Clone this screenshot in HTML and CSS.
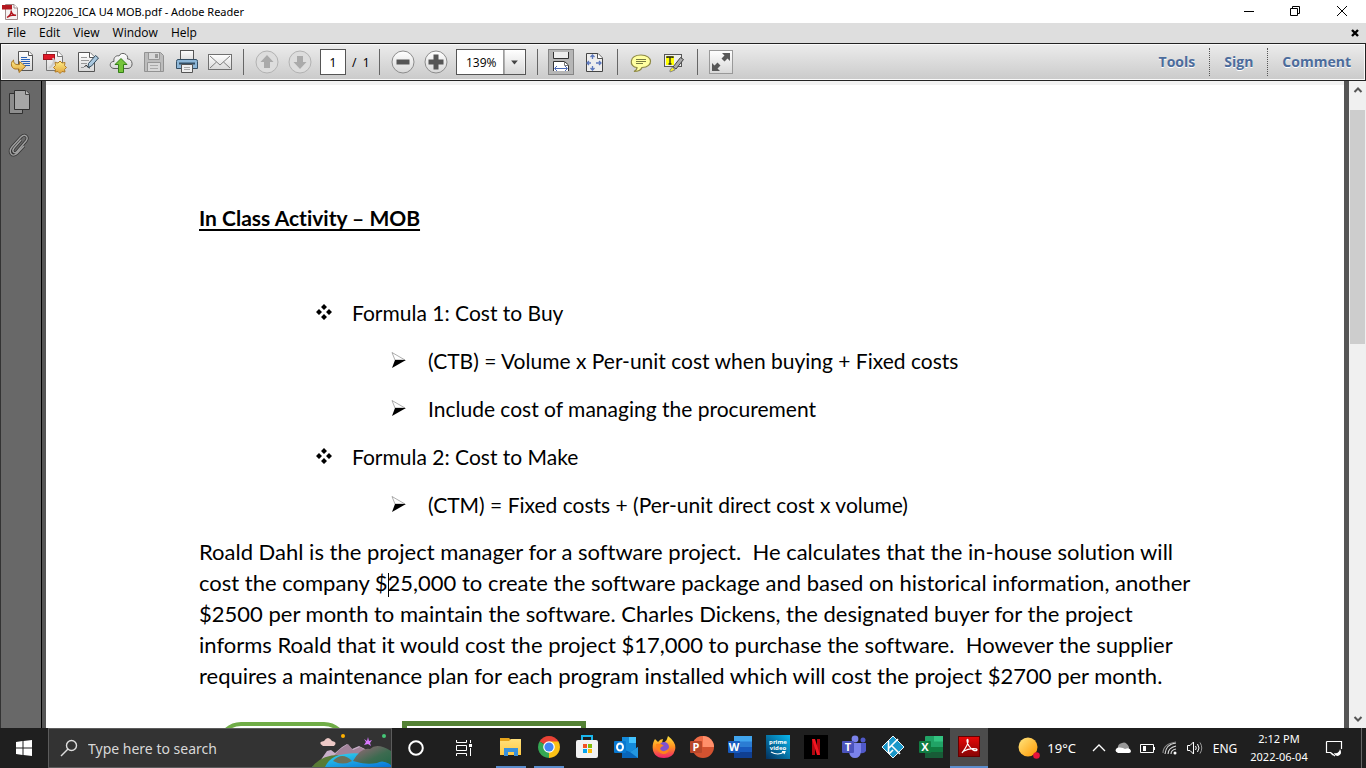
FILE: index.html
```html
<!DOCTYPE html>
<html lang="en">
<head>
<meta charset="utf-8">
<title>PROJ2206_ICA U4 MOB.pdf - Adobe Reader</title>
<link rel="stylesheet" href="styles.css">
</head>
<body>
<svg class="defs" width="0" height="0" aria-hidden="true">
  <defs>
    <linearGradient id="paper" x1="0" y1="0" x2="0" y2="1"><stop offset="0" stop-color="#fff"/><stop offset="1" stop-color="#d8d8d8"/></linearGradient>
    <linearGradient id="gold" x1="0" y1="0" x2="0" y2="1"><stop offset="0" stop-color="#fff08a"/><stop offset="1" stop-color="#e0a23a"/></linearGradient>
    <linearGradient id="sun" x1="0" y1="0" x2="1" y2="1"><stop offset="0" stop-color="#ffe680"/><stop offset="1" stop-color="#ff9800"/></linearGradient>
    <linearGradient id="water" x1="0" y1="0" x2="1" y2="1"><stop offset="0" stop-color="#35dff0"/><stop offset="1" stop-color="#0873d8"/></linearGradient>
    <linearGradient id="hill" x1="0" y1="0" x2="1" y2="1"><stop offset="0" stop-color="#a1687b"/><stop offset=".6" stop-color="#3d6b50"/><stop offset="1" stop-color="#256647"/></linearGradient>
    <linearGradient id="fire" x1="0" y1="0" x2="0" y2="1"><stop offset="0" stop-color="#ffe23c"/><stop offset=".5" stop-color="#ff9020"/><stop offset="1" stop-color="#f0206c"/></linearGradient>
    <linearGradient id="prime" x1="1" y1="0" x2="0" y2="1"><stop offset="0" stop-color="#08b8f0"/><stop offset="1" stop-color="#03305c"/></linearGradient>
    <linearGradient id="acro" x1="0" y1="0" x2="0" y2="1"><stop offset="0" stop-color="#e80808"/><stop offset="1" stop-color="#860505"/></linearGradient>
    <linearGradient id="folder" x1="0" y1="0" x2="0" y2="1"><stop offset="0" stop-color="#ffe17c"/><stop offset="1" stop-color="#ffc943"/></linearGradient>
  </defs>
</svg>

<header class="titlebar">
  <svg class="app-icon" width="16" height="16" viewBox="0 0 16 16" aria-hidden="true">
    <path d="M3.500.5H12L15.500 4V15.500H3.500Z" fill="#f5f2f2" stroke="#a08a8a"/>
    <path d="M12 .5V4H15.500" fill="#fff" stroke="#a08a8a"/>
    <path d="M0 1H10V5.500H0Z" fill="#b31820"/>
    <path d="M5 13.500C7.500 12 9.500 9 9.200 6.500C9 9 11.500 11.500 14 11.200C10.500 10.500 7 12 5 13.500Z" fill="none" stroke="#b31820" stroke-width="1.400"/>
  </svg>
  <span class="title-text">PROJ2206_ICA U4 MOB.pdf - Adobe Reader</span>
  <div class="window-controls">
    <button aria-label="Minimize"><svg width="12" height="12" viewBox="0 0 12 12"><path d="M1 6.500H11" stroke="#000"/></svg></button>
    <button aria-label="Restore"><svg width="12" height="12" viewBox="0 0 12 12"><path d="M3.500 3.500V1.500H10.500V8.500H8.500M1.500 3.500H8.500V10.500H1.500Z" fill="none" stroke="#000"/></svg></button>
    <button aria-label="Close"><svg width="12" height="12" viewBox="0 0 12 12"><path d="M1 1L11 11M11 1L1 11" stroke="#000"/></svg></button>
  </div>
</header>

<nav class="menubar" aria-label="Menu">
  <button>File</button><button>Edit</button><button>View</button><button>Window</button><button>Help</button>
  <button class="doc-close" aria-label="Close document"><svg width="8" height="8" viewBox="0 0 8 8"><path d="M1 1L7 7M7 1L1 7" stroke="#000" stroke-width="2.400"/></svg></button>
</nav>

<div class="toolbar" role="toolbar" aria-label="Tools">
  <button class="tool" aria-label="Open"><svg width="24" height="24" viewBox="0 0 24 24"><path d="M8.500 1.500H19L22.500 5V20.500H8.500Z" fill="url(#paper)" stroke="#555"/><path d="M18.500 1.500V5.500H22.500" fill="#fff" stroke="#555"/><path d="M11 7.500H17M11 9.500H20M11 11.500H20M13 13.500H20M15 15.500H20" stroke="#2862b8"/><path d="M3.500 10C.5 12 .5 18 5 19H9V22.500L15.500 16.500L9.500 11.500V14.500C6 15 3.500 14 3.500 10Z" fill="url(#gold)" stroke="#a87520"/></svg></button>
  <button class="tool" aria-label="Create PDF"><svg width="24" height="24" viewBox="0 0 24 24"><path d="M3.500 1.500H15L19.500 6V20.500H3.500Z" fill="url(#paper)" stroke="#777"/><path d="M14.500 1.500V6.500H19.500" fill="#fff" stroke="#777"/><rect x=".5" y="4.500" width="11" height="5" fill="#df1927" stroke="#a2121c"/><path d="M10 8Q11 13 17 14M6 18Q11 15 11 10" fill="none" stroke="#ccc" stroke-width="2"/><path d="M17 11L19 13L22 12.500L21.500 15.500L23.500 17.500L21.500 19.500L22 22L19 21.500L17 23.500L15 21.500L12 22L12.500 19.500L10.500 17.500L12.500 15.500L12 12.500L15 13Z" fill="url(#gold)" stroke="#b27b25"/></svg></button>
  <button class="tool" aria-label="Edit"><svg width="24" height="24" viewBox="0 0 24 24"><path d="M2.500 2.500H14L18.500 7V21.500H2.500Z" fill="url(#paper)" stroke="#555"/><path d="M13.500 2.500V7.500H18.500" fill="#fff" stroke="#555"/><path d="M5 7.500H11M5 10.500H13M5 13.500H11M5 17.500H8" stroke="#999"/><path d="M8.500 17Q10 14 11 16T14 18" fill="none" stroke="#222"/><path d="M12 17.500L12.500 13.500L19.500 5.500L22.500 8L15.500 16Z" fill="#aac8df" stroke="#344c5e"/></svg></button>
  <button class="tool" aria-label="Upload"><svg width="24" height="24" viewBox="0 0 24 24"><path d="M5 18.500C-.5 18 .5 11 5 11.500C4 7 8 5 10 6C12 1 20 4 18.500 9C24 8.500 25 18 19 18.500Z" fill="url(#paper)" stroke="#606060"/><path d="M12 8.500L18 14.500H14.500V22.500H9.500V14.500H6Z" fill="#75c43a" stroke="#347e18"/></svg></button>
  <button class="tool" aria-label="Save" disabled><svg width="24" height="24" viewBox="0 0 24 24"><path d="M2.500 2.500H18.500L21.500 5.500V21.500H2.500Z" fill="#bcbcbc" stroke="#929292"/><path d="M6.500 3V9.500H17.500V3M5.500 21V12.500H18.500V21" fill="#d8d8d8" stroke="#969696"/><path d="M13 4H16V8H13Z" fill="#979797"/><path d="M8 15.500H16M8 18.500H16" stroke="#aaa"/></svg></button>
  <button class="tool" aria-label="Print"><svg width="24" height="24" viewBox="0 0 24 24"><rect x="5.500" y=".5" width="13" height="11" fill="url(#paper)" stroke="#555"/><path d="M3 9.500H21Q22.500 9.500 22.500 11.500V18.500H1.500V11.500Q1.500 9.500 3 9.500Z" fill="#8db7d8" stroke="#344f65"/><path d="M4 13.500H20" stroke="#344f65" stroke-width="2"/><path d="M6.500 14.500H17.500V22.500H6.500Z" fill="#eee" stroke="#555"/><path d="M9 17.500H15M9 19.500H15" stroke="#aaa"/></svg></button>
  <button class="tool" aria-label="Email"><svg width="24" height="24" viewBox="0 0 24 24"><rect x=".5" y="4.500" width="23" height="15" fill="url(#paper)" stroke="#707070"/><path d="M2 6L12 15L22 6M2 18L8.500 12M22 18L15.500 12" fill="none" stroke="#808080"/></svg></button>
  <span class="sep"></span>
  <button class="tool" aria-label="Previous page" disabled><svg width="24" height="24" viewBox="0 0 24 24"><circle cx="12" cy="12" r="11" fill="#ddd" stroke="#b2b2b2"/><path d="M12 5L18.500 12H15V18H9V12H5.500Z" fill="#aaa"/></svg></button>
  <button class="tool" aria-label="Next page" disabled><svg width="24" height="24" viewBox="0 0 24 24"><circle cx="12" cy="12" r="11" fill="#ddd" stroke="#b2b2b2"/><path d="M12 19L18.500 12H15V6H9V12H5.500Z" fill="#aaa"/></svg></button>
  <input class="page-input" aria-label="Page number" value="1">
  <span class="page-total">/&nbsp; 1</span>
  <span class="sep"></span>
  <button class="tool" aria-label="Zoom out"><svg width="24" height="24" viewBox="0 0 24 24"><circle cx="12" cy="12" r="11" fill="url(#paper)" stroke="#8c8c8c"/><path d="M5.500 12H18.500" stroke="#555" stroke-width="5"/></svg></button>
  <button class="tool" aria-label="Zoom in"><svg width="24" height="24" viewBox="0 0 24 24"><circle cx="12" cy="12" r="11" fill="url(#paper)" stroke="#8c8c8c"/><path d="M4.500 12H19.500M12 4.500V19.500" stroke="#555" stroke-width="5"/></svg></button>
  <span class="zoom-box">
    <select aria-label="Zoom level"><option>139%</option></select>
    <svg class="zoom-arrow" width="22" height="25" viewBox="0 0 22 25" aria-hidden="true"><path d="M0 0H22V25H0Z" fill="url(#paper)"/><path d="M.5 0V25" stroke="#555"/><path d="M8 11H15L11.500 15Z" fill="#444"/></svg>
  </span>
  <span class="sep"></span>
  <button class="tool" aria-label="Fit width"><svg width="26" height="26" viewBox="0 0 26 26"><rect x=".5" y=".5" width="25" height="25" fill="#b6b6b6" stroke="#858585"/><path d="M5.500 3V9.500H20.500V3" fill="#eee" stroke="#333"/><path d="M5.500 22V12.500H16.500L20.500 16V22" fill="#fff" stroke="#333"/><path d="M16.500 12.500V16.500H20.500" fill="none" stroke="#777"/><path d="M7 19.500H19M9 17L6.500 19.500L9 22M17 17L19.500 19.500L17 22" fill="none" stroke="#4b69b5"/></svg></button>
  <button class="tool" aria-label="Fit page"><svg width="24" height="24" viewBox="0 0 24 24"><path d="M4.500 3.500H16L20.500 8V21.500H4.500Z" fill="#eee" stroke="#444"/><path d="M15.500 3.500V8.500H20.500" fill="#fff" stroke="#555"/><path d="M10.500 5V9M8.500 7L10.500 5L12.500 7M10.500 20V16M8.500 18L10.500 20L12.500 18M5 13H9M7 11L5 13L7 15M19 13H14M17 11L19 13L17 15" fill="none" stroke="#5d78bd" stroke-width="1.300"/></svg></button>
  <span class="sep"></span>
  <button class="tool" aria-label="Comment"><svg width="24" height="24" viewBox="0 0 24 24"><path d="M12 5C-.5 5 0 17 8 17.500C8 20 6 21 5 21.500C9 21.500 12 20 13 17.500C25 17 24 5 12 5Z" fill="#ffffa0" stroke="#8d8844" stroke-width="1.200"/><path d="M7 9.500H17M7 11.500H17M7 13.500H14" stroke="#777b42"/></svg></button>
  <button class="tool" aria-label="Highlight text"><svg width="24" height="24" viewBox="0 0 24 24"><rect x="2.500" y="4.500" width="17" height="12" fill="#eee" stroke="#555"/><rect x="4" y="6" width="8" height="9" fill="#ff0"/><path d="M5 8V7H11V8M8 7V14M6.500 14H9.500" fill="none" stroke="#222" stroke-width="1.300"/><path d="M11 17L18.500 7.500L21.500 9.500L14 19Z" fill="#aaa" stroke="#444"/><path d="M10.500 17L8 20V22L13 20Z" fill="#f6ee28" stroke="#888"/></svg></button>
  <span class="sep"></span>
  <button class="tool" aria-label="Read mode"><svg width="24" height="24" viewBox="0 0 24 24"><rect x=".5" y=".5" width="23" height="23" fill="url(#paper)" stroke="#999"/><path d="M13 3H21V11L18.500 8.500L15.500 11.500L12.500 8.500L15.500 5.500ZM3 13L5.500 15.500L8.500 12.500L11.500 15.500L8.500 18.500L11 21H3Z" fill="#585858"/></svg></button>
  <div class="panels"><button>Tools</button><button>Sign</button><button>Comment</button></div>
</div>

<main class="workspace">
  <aside class="rail">
    <button aria-label="Page thumbnails"><svg width="24" height="26" viewBox="0 0 24 26"><path d="M2.500 4.500H15.500V24.500H2.500Z" fill="#8d8d8d" stroke="#303030"/><path d="M7.500 1.500H19L22.500 5V20.500H7.500Z" fill="#a6a6a6" stroke="#303030"/><path d="M18.500 1.500V5.500H22.500" fill="#bbb" stroke="#444"/></svg></button>
    <button aria-label="Attachments"><svg width="24" height="26" viewBox="0 0 24 26"><path d="M14 8L7 16C4 20 8 22 10 19.500L19 9C22 5 18 1 14 5L5 15C1 20 5 26 10 21.500L17 14" fill="none" stroke="#333" stroke-width="3"/><path d="M14 8L7 16C4 20 8 22 10 19.500L19 9C22 5 18 1 14 5L5 15C1 20 5 26 10 21.500L17 14" fill="none" stroke="#a0a0a0" stroke-width="1.400"/></svg></button>
  </aside>
  <article class="page">
    <h1>In Class Activity – MOB</h1>
    <ul class="formulas">
      <li><svg class="mark" width="18" height="18" viewBox="0 0 18 18"><path d="M9 1L12 4L9 7L6 4ZM4 6L7 9L4 12L1 9ZM14 6L17 9L14 12L11 9ZM9 11L12 14L9 17L6 14Z"/></svg><span>Formula 1: Cost to Buy</span></li>
      <li class="sub"><svg class="mark" width="18" height="18" viewBox="0 0 18 18"><path d="M1 1.500L14 9L4 9Z" fill="#fff" stroke="#777" stroke-width=".6"/><path d="M4 9H15L1 17Z"/></svg><span>(CTB) = Volume x Per-unit cost when buying + Fixed costs</span></li>
      <li class="sub"><svg class="mark" width="18" height="18" viewBox="0 0 18 18"><path d="M1 1.500L14 9L4 9Z" fill="#fff" stroke="#777" stroke-width=".6"/><path d="M4 9H15L1 17Z"/></svg><span>Include cost of managing the procurement</span></li>
      <li><svg class="mark" width="18" height="18" viewBox="0 0 18 18"><path d="M9 1L12 4L9 7L6 4ZM4 6L7 9L4 12L1 9ZM14 6L17 9L14 12L11 9ZM9 11L12 14L9 17L6 14Z"/></svg><span>Formula 2: Cost to Make</span></li>
      <li class="sub"><svg class="mark" width="18" height="18" viewBox="0 0 18 18"><path d="M1 1.500L14 9L4 9Z" fill="#fff" stroke="#777" stroke-width=".6"/><path d="M4 9H15L1 17Z"/></svg><span>(CTM) = Fixed costs + (Per-unit direct cost x volume)</span></li>
    </ul>
    <p>Roald Dahl is the project manager for a software project.&nbsp; He calculates that the in-house solution will<br>cost the company $<span class="caret"></span>25,000 to create the software package and based on historical information, another<br>$2500 per month to maintain the software. Charles Dickens, the designated buyer for the project<br>informs Roald that it would cost the project $17,000 to purchase the software.&nbsp; However the supplier<br>requires a maintenance plan for each program installed which will cost the project $2700 per month.</p>
    <div class="shapes"><div class="shape round"></div><div class="shape box"></div></div>
  </article>
  <div class="scrollbar">
    <button aria-label="Scroll up"><svg width="10" height="8" viewBox="0 0 10 8"><path d="M1.500 6L5 2.500L8.500 6" fill="none" stroke="#555" stroke-width="2"/></svg></button>
    <div class="track"><div class="thumb"></div></div>
    <button aria-label="Scroll down"><svg width="10" height="8" viewBox="0 0 10 8"><path d="M1.500 2L5 5.500L8.500 2" fill="none" stroke="#555" stroke-width="2"/></svg></button>
  </div>
</main>

<footer class="taskbar">
  <button class="start" aria-label="Start"><svg width="16" height="16" viewBox="0 0 16 16" fill="#fff"><path d="M0 2L6.500 1V7.500H0ZM7.500 1L16 0V7.500H7.500ZM0 8.500H6.500V15L0 14ZM7.500 8.500H16V16L7.500 15Z"/></svg></button>
  <div class="search">
    <svg width="18" height="18" viewBox="0 0 18 18" fill="none" stroke="#ddd" stroke-width="1.400"><circle cx="11.500" cy="6.500" r="5"/><path d="M8 10L1 17"/></svg>
    <input type="search" aria-label="Search" placeholder="Type here to search">
    <svg class="scene" width="80" height="38" viewBox="0 0 80 38" aria-hidden="true">
      <path d="M9 32L16 22L20 21L24 24L31 18L36 15L41 20L48 17L54 20L58 30V38H6Z" fill="#c8afc9"/><path d="M20 30L28 21L37 15L42 21L49 18L56 22L56 34Z" fill="#a2839a"/>
      <path d="M1 38Q16 27 35 25Q52 22 80 32V38Z" fill="url(#water)"/><path d="M1 38Q10 26 28 26Q18 29 14 38Z" fill="#587b35"/>
      <path d="M42 32Q50 18 59 20Q66 13 80 22V36Q72 30 66 34Q54 36 42 32Z" fill="url(#hill)"/><path d="M22 32Q31 22 41 32Q32 37 22 32Z" fill="#6b715a"/>
      <path d="M12 17Q6 13 13 12Q17 6 21 12Q27 13 23 17Z" fill="#edc9c6"/><circle cx="32" cy="7" r="2" fill="#ffb000"/><circle cx="73" cy="7" r="2" fill="#45c878"/><path d="M57 8L58 12L61 11L59 14L60 17L57 15L53 16L55 13L53 10L56 12Z" fill="#d878ff"/>
    </svg>
  </div>
  <button class="wide" aria-label="Cortana"><svg width="18" height="18" viewBox="0 0 18 18"><circle cx="9" cy="9" r="6.800" fill="none" stroke="#fff" stroke-width="2"/></svg></button>
  <button class="wide" aria-label="Task view"><svg width="18" height="18" viewBox="0 0 18 18" fill="none" stroke="#fff"><path d="M1.500 1V3.500H11.500V1M1.500 17V14.500H11.500V17M1.500 6.500H11.500V11.500H1.500ZM15.500 1V4M15.500 9V17"/><path d="M14 5H17V8H14Z" fill="#fff" stroke="none"/></svg></button>
  <div class="apps">
    <button class="open" aria-label="File Explorer"><svg width="24" height="24" viewBox="0 0 24 24"><path d="M1 3H10L12 5H22V12H1Z" fill="#e6a51c"/><path d="M1 6H10L12 4H22V20H1Z" fill="url(#folder)"/><path d="M5 21V13H19V21H15V17H9V21Z" fill="#3991db"/></svg></button>
    <button class="open" aria-label="Chrome"><svg width="24" height="24" viewBox="0 0 24 24"><path d="M12 12L2.500 6.500A11 11 0 0 1 21.500 6.500Z" fill="#e94235"/><path d="M12 12L21.500 6.500A11 11 0 0 1 12 23Z" fill="#fbc116"/><path d="M12 12V23A11 11 0 0 1 2.500 6.500Z" fill="#34a853"/><path d="M12 6.500H21.500L17 12ZM12 23L17 14L12 17Z" fill="#fbc116"/><circle cx="12" cy="12" r="5.800" fill="#fff"/><circle cx="12" cy="12" r="4.600" fill="#4285f4"/></svg></button>
    <button aria-label="Microsoft Store"><svg width="24" height="24" viewBox="0 0 24 24"><path d="M7 6V1H17V6" fill="none" stroke="#1bb7ed" stroke-width="2"/><rect x="1" y="5" width="22" height="18" rx="2" fill="#f2f2f2"/><path d="M8 9H12V13H8Z" fill="#f35325"/><path d="M13 9H17V13H13Z" fill="#81bc06"/><path d="M8 14H12V18H8Z" fill="#05a6f0"/><path d="M13 14H17V18H13Z" fill="#ffba08"/></svg></button>
    <button aria-label="Outlook"><svg width="24" height="24" viewBox="0 0 24 24"><path d="M8 2H22V20H8Z" fill="#148bdb"/><path d="M15 2H22V8H15Z" fill="#43c3ff"/><path d="M8 14L16 17L24 12V23H8Z" fill="#0865b8"/><path d="M16 17L24 12V23Z" fill="#2397df"/><rect y="6" width="12" height="12" rx="1" fill="#0878d0"/><ellipse cx="6" cy="12" rx="3" ry="3.500" fill="none" stroke="#fff" stroke-width="2"/></svg></button>
    <button aria-label="Firefox"><svg width="24" height="24" viewBox="0 0 24 24"><path d="M12 23C-1 23-1 10 3 4L6 7Q8 4 11 4L10 8Q14 7 15 4L16 1Q25 8 23 15Q21 23 12 23Z" fill="url(#fire)"/><circle cx="12" cy="12" r="5" fill="#8052cf"/><path d="M4 9Q9 8 12 11Q9 11 8 14Q12 19 17 13Q17 19 11 19Q4 17 4 9Z" fill="#ff841c"/></svg></button>
    <button aria-label="PowerPoint"><svg width="24" height="24" viewBox="0 0 24 24"><circle cx="13" cy="12" r="11" fill="#d35230"/><path d="M13 1A11 11 0 0 1 24 12H13Z" fill="#ff8f6b"/><path d="M13 1V12H2A11 11 0 0 1 13 1Z" fill="#ed6c47"/><rect y="6" width="12" height="12" rx="1" fill="#b7472a"/><text class="logo-letter" x="6" y="16">P</text></svg></button>
    <button aria-label="Word"><svg width="24" height="24" viewBox="0 0 24 24"><rect x="6" y="1" width="18" height="22" rx="1" fill="#2b7cd3"/><path d="M6 1H24V6.500H6Z" fill="#41a5ee"/><path d="M6 12H24V17H6Z" fill="#185abd"/><path d="M6 17H24V23H6Z" fill="#103f91"/><rect y="6" width="12" height="12" rx="1" fill="#185abd"/><text class="logo-letter" x="6" y="16">W</text></svg></button>
    <button aria-label="Prime Video"><svg width="24" height="24" viewBox="0 0 24 24"><rect width="24" height="24" fill="url(#prime)"/><text class="prime-text" x="12" y="9">prime</text><text class="prime-text" x="12" y="15">video</text><path d="M5 17Q12 21 18 17M16 16.500H19L18 19" fill="none" stroke="#fff" stroke-width="1.200"/></svg></button>
    <button aria-label="Netflix"><svg width="24" height="24" viewBox="0 0 24 24"><path d="M0 0H24V24H0Z"/><path d="M8 4H11V20H8ZM13 4H16V20H13Z" fill="#b20710"/><path d="M8 4H11L16 20H13Z" fill="#f01622"/></svg></button>
    <button aria-label="Teams"><svg width="24" height="24" viewBox="0 0 24 24"><circle cx="13" cy="4" r="3.400" fill="#7b83eb"/><circle cx="21" cy="5" r="2.500" fill="#5059c9"/><path d="M16 8H24V16Q22 19 18 18Z" fill="#5059c9"/><path d="M7 8H19V17Q18 23 13 23Q8 23 7 17Z" fill="#7b83eb"/><rect y="6" width="12" height="12" rx="1" fill="#4b53bc"/><text class="logo-letter" x="6" y="16">T</text></svg></button>
    <button aria-label="Kodi"><svg width="24" height="24" viewBox="0 0 24 24"><path d="M12 1L23 12L12 23L1 12Z" fill="#1997c9" stroke="#e8f5fa"/><path d="M7.500 6V18M8 13L17 4M11 11L19 19M12 15L8 19" fill="none" stroke="#fff" stroke-width="1.600"/></svg></button>
    <button aria-label="Excel"><svg width="24" height="24" viewBox="0 0 24 24"><rect x="6" y="1" width="18" height="22" rx="1" fill="#21a366"/><path d="M15 1H24V6.500H15Z" fill="#33c481"/><path d="M6 12H24V17H6Z" fill="#107c41"/><path d="M6 17H24V23H6Z" fill="#185c37"/><rect y="6" width="12" height="12" rx="1" fill="#107c41"/><text class="logo-letter" x="6" y="16">X</text></svg></button>
    <button class="open active" aria-label="Adobe Reader"><svg width="24" height="24" viewBox="0 0 24 24"><rect x="1.500" y="1.500" width="21" height="20" fill="url(#acro)" stroke="#600"/><path d="M5 18C8 14 12 8 11 5C10 3 9 7 12 11C14 14 18 17 20 15C21 13 12 13 7 16C5 17 5 18 6 17" fill="none" stroke="#fff" stroke-width="1.200"/></svg></button>
  </div>
  <div class="tray">
    <button class="weather"><svg width="24" height="24" viewBox="0 0 24 24"><circle cx="11" cy="11" r="9.500" fill="url(#sun)"/><circle cx="19.500" cy="19.500" r="3.300" fill="#e8133b"/></svg><span>19°C</span></button>
    <button class="tray-icon" aria-label="Hidden icons"><svg width="18" height="18" viewBox="0 0 18 18"><path d="M3 12L9 6L15 12" fill="none" stroke="#fff" stroke-width="1.300"/></svg></button>
    <button class="tray-icon" aria-label="OneDrive"><svg width="18" height="18" viewBox="0 0 18 18"><path d="M4 10Q3 5 8 4Q12 2 15 8V13H4Z" fill="#999"/><path d="M4 14Q-1 11 4 8.500Q9 8 11 10Q16 8 17 12Q17 14 15 14Z" fill="#fff"/></svg></button>
    <button class="tray-icon" aria-label="Battery"><svg width="18" height="18" viewBox="0 0 18 18"><path d="M2.500 5.500H15.500V13.500H2.500Z" fill="none" stroke="#fff"/><path d="M5 7H8V12H5ZM16 8H17V11H16Z" fill="#fff"/></svg></button>
    <button class="tray-icon" aria-label="Network"><svg width="18" height="18" viewBox="0 0 18 18" fill="none" stroke="#ddd" stroke-width="1.100"><path d="M3 15Q4 5 14 4M6 15Q6 9 14 7M9 15Q9 11 14 10" /><path d="M1 14Q1 5 14 3" stroke="#888"/><circle cx="13" cy="14" r="1.500" fill="#fff" stroke="none"/></svg></button>
    <button class="tray-icon" aria-label="Volume"><svg width="18" height="18" viewBox="0 0 18 18" fill="none" stroke="#fff"><path d="M1.500 6.500H4L7.500 3V15L4 11.500H1.500ZM9.500 7Q11 9 9.500 11M11.500 5Q14.500 9 11.500 13"/><path d="M14 3.500Q17.500 9 14 14.500" stroke="#999"/></svg></button>
    <button class="lang">ENG</button>
    <button class="clock"><span>2:12 PM</span><span>2022-06-04</span></button>
    <button class="notify" aria-label="Notifications"><svg width="18" height="18" viewBox="0 0 18 18"><path d="M1.500 2.500H16.500V10M8 16L5.500 13.500H1.500V2.500M5.500 13.500L10 17" fill="none" stroke="#fff" stroke-width="1.200"/><path d="M15 10Q18 15 13 17Q10 17 9 14Q14 15 15 10Z" fill="#fff"/></svg></button>
  </div>
</footer>
</body>
</html>
```
FILE: styles.css
```css
* { box-sizing: border-box; }
body { margin: 0; height: 100vh; display: flex; flex-direction: column; overflow: hidden; background: #fff; color: #000; font-family: "Open Sans", "Noto Sans", sans-serif; font-size: 12px; }
button { margin: 0; padding: 0; border: 0; background: none; color: inherit; font: inherit; display: flex; align-items: center; justify-content: center; }
svg { display: block; flex: none; }
.defs { position: absolute; }

.titlebar { flex: none; height: 23px; display: flex; align-items: center; padding-left: 2px; background: #fff; font-family: "Noto Sans", sans-serif; font-size: 11px; }
.title-text { margin-left: 5px; }
.window-controls { display: flex; height: 100%; margin-left: auto; }
.window-controls button { width: 46px; padding-bottom: 2px; }
.window-controls button:last-child { width: 48px; }

.menubar { flex: none; height: 20px; display: flex; align-items: center; gap: 13px; padding: 0 7px 1px; background: #dedede; font-size: 12px; }
.doc-close { margin-left: auto; }

.toolbar { flex: none; height: 38px; display: flex; align-items: center; padding: 0 0 0 4px; border: 1px solid #222; background: linear-gradient(#ececec, #cacaca); box-shadow: inset 0 0 0 1px #fafafa; font-family: "Noto Sans", sans-serif; }
.tool { flex: none; width: 33px; height: 32px; }
.sep { flex: none; width: 14px; height: 26px; background: linear-gradient(#666, #666) center / 1px 100% no-repeat; }
.page-input { width: 26px; height: 26px; margin-left: 4px; padding: 0; border: 1px solid #555; background: #fff; text-align: center; font: inherit; color: #000; }
.page-total { width: 26px; padding-left: 6px; white-space: nowrap; }
.zoom-box { position: relative; flex: none; width: 70px; height: 26px; margin: 0 4px; border: 1px solid #555; background: #fff; }
.zoom-box select { width: 100%; height: 100%; padding: 0 0 0 9px; border: 0; appearance: none; background: transparent; font-family: "Open Sans", sans-serif; font-size: 12px; color: #000; }
.zoom-arrow { position: absolute; right: 0; top: 0; height: 100%; pointer-events: none; }
.panels { margin-left: auto; display: flex; color: #4c6c9c; font-family: "Open Sans", sans-serif; font-size: 14px; font-weight: 700; }
.panels button { height: 28px; padding: 0 14px 2px; border-left: 1px dotted #555; text-shadow: 0 1px #fff; }
.panels button:first-child { border-left: 0; }

.workspace { flex: 1; min-height: 0; display: flex; background: #555; overflow: hidden; }
.rail { flex: none; width: 42px; display: flex; flex-direction: column; align-items: center; gap: 17px; padding: 8px 4px 0 0; background: #686868; border-left: 1px solid #333; border-right: 1px solid #000; margin-right: 4px; }
.page { flex: 1; min-width: 0; margin-right: 5px; padding: 121px 40px 0 153px; overflow: hidden; background: #fff; box-shadow: inset 0 4px #f2f2f2; font-family: Lato, sans-serif; font-size: 21px; font-variant-ligatures: none; }
.page h1 { margin: 0; font-size: 21px; font-weight: 700; line-height: 31px; text-decoration: underline; text-decoration-thickness: 2px; text-underline-offset: 3px; text-decoration-skip-ink: none; }
.formulas { list-style: none; margin: 55px 0 0 116px; padding: 0; }
.formulas li { display: flex; align-items: center; gap: 19px; height: 48px; white-space: nowrap; }
.formulas .sub { padding-left: 76px; }
.page p { margin: 8px 0 0; font-size: 22px; line-height: 31px; white-space: nowrap; }
.caret { display: inline-block; width: 1px; height: 24px; margin-right: -1px; background: #000; vertical-align: middle; }
.shapes { display: flex; align-items: flex-start; gap: 54px; margin: 30px 0 0 18px; }
.shape { height: 60px; }
.round { width: 131px; margin-top: 1px; border: 4px solid #70ad47; border-radius: 24px; }
.box { width: 184px; border: 5px solid #548235; }
.scrollbar { flex: none; width: 17px; display: flex; flex-direction: column; background: #f0f0f0; }
.scrollbar button { height: 18px; }
.track { flex: 1; padding: 11px 0 0 1px; }
.thumb { height: 39%; width: 15px; background: #cdcdcd; }

.taskbar { flex: none; height: 40px; display: flex; background: #1f1f1f; color: #fff; }
.start { width: 48px; }
.search { width: 344px; display: flex; align-items: center; padding-left: 11px; background: #333; border: 1px solid #5c5c5c; }
.search input { flex: 1; min-width: 0; margin: 0; padding: 0 0 0 10px; border: 0; background: none; color: #fff; font-family: "Noto Sans", sans-serif; font-size: 14px; }
.search input::placeholder { color: #d8d8d8; }
.wide { width: 48px; }
.apps { width: 502px; display: flex; padding: 0 2px 0 4px; }
.apps button { flex: 1; border-bottom: 2px solid transparent; }
.apps .open { background: linear-gradient(#5b8dcc, #5b8dcc) center bottom / 30px 2px no-repeat border-box; }
.apps .active { background: #4c4c4c; border-bottom-color: #5b8dcc; }
.logo-letter { fill: #fff; font: 700 11px "Open Sans", sans-serif; text-anchor: middle; }
.prime-text { fill: #fff; font: 700 6px "Open Sans", sans-serif; text-anchor: middle; }
.tray { margin-left: auto; display: flex; align-items: center; font-family: "Noto Sans", sans-serif; font-size: 12px; }
.weather { gap: 6px; margin-right: 11px; font-size: 13px; }
.tray-icon { width: 24px; height: 40px; }
.lang { width: 36px; }
.clock { width: 72px; flex-direction: column; line-height: 18px; font-size: 11px; }
.notify { width: 47px; height: 40px; margin-right: 4px; padding-right: 9px; border-right: 1px solid #666; }
```
